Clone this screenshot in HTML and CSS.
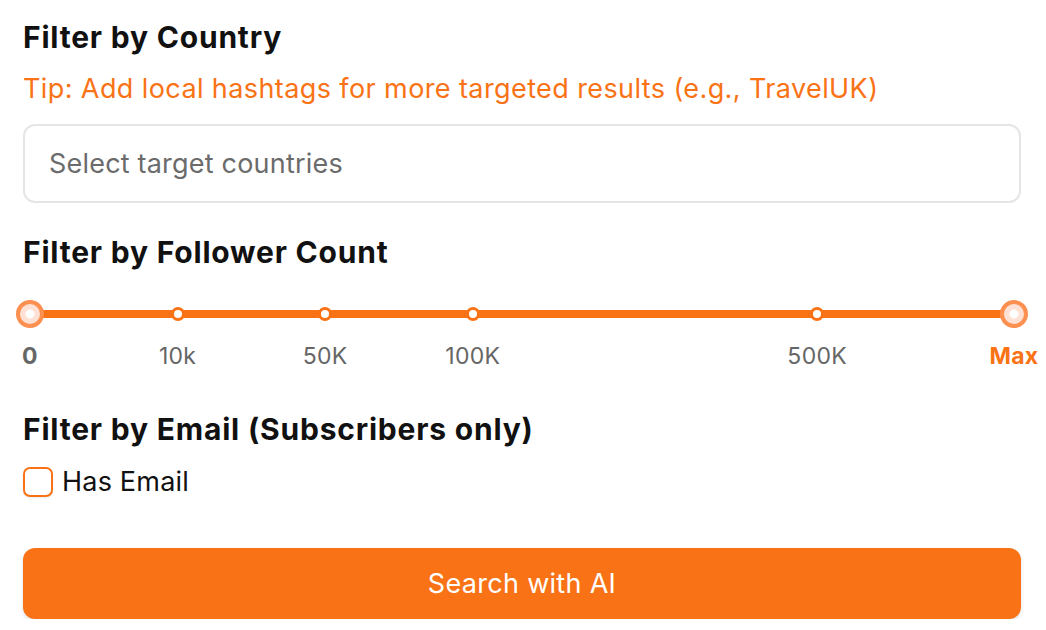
FILE: index.html
```html
<!DOCTYPE html>
<html>
<head>
<meta charset="utf-8">
<link rel="stylesheet" href="styles.css">
</head>
<body>
<div class="panel">
  <section class="group">
    <h2 class="title">Filter by Country</h2>
    <p class="tip">Tip: Add local hashtags for more targeted results (e.g., TravelUK)</p>
    <div class="select">Select target countries</div>
  </section>

  <section class="group">
    <h2 class="title">Filter by Follower Count</h2>
    <div class="slider">
      <div class="track">
        <span class="handle" style="left:0%"></span>
        <span class="tick" style="left:15%"></span>
        <span class="tick" style="left:30%"></span>
        <span class="tick" style="left:45%"></span>
        <span class="tick" style="left:80%"></span>
        <span class="handle" style="left:100%"></span>
      </div>
      <div class="labels">
        <span class="label strong" style="left:0%">0</span>
        <span class="label" style="left:15%">10k</span>
        <span class="label" style="left:30%">50K</span>
        <span class="label" style="left:45%">100K</span>
        <span class="label" style="left:80%">500K</span>
        <span class="label max" style="left:100%">Max</span>
      </div>
    </div>
  </section>

  <section class="group">
    <h2 class="title">Filter by Email (Subscribers only)</h2>
    <label class="check">
      <span class="box"></span>
      <span>Has Email</span>
    </label>
  </section>

  <button class="search">Search with AI</button>
</div>
</body>
</html>
```

FILE: styles.css
```css
* { box-sizing: border-box; }
html, body { margin: 0; padding: 0; background: #fff; }
body {
  font-family: Inter, "Noto Sans", "Liberation Sans", sans-serif;
  color: #111;
}
.panel {
  width: 998px;
  margin-left: 23px;
  padding-top: 18px;
  display: flex;
  flex-direction: column;
}
.title {
  margin: 0;
  font-size: 30px;
  line-height: 38px;
  font-weight: 700;
  color: #111;
  letter-spacing: 0.8px;
}
.tip {
  margin: 18px 0 0;
  font-size: 27px;
  line-height: 30px;
  color: #f97316;
  letter-spacing: 0.4px;
}
.select {
  margin-top: 20px;
  height: 79px;
  border: 2px solid #e5e5e5;
  border-radius: 12px;
  padding: 0 24px;
  display: flex;
  align-items: center;
  font-size: 27px;
  letter-spacing: 0.2px;
  color: #6b6b6b;
}
.group:nth-child(2) { margin-top: 30px; }
.slider {
  position: relative;
  margin-top: 39px;
  padding: 0 7px;
}
.track {
  position: relative;
  height: 8px;
  background: #f97316;
  border-radius: 4px;
}
.tick, .handle {
  position: absolute;
  top: 50%;
  transform: translate(-50%, -50%);
  border-radius: 50%;
  background: #fff;
}
.tick {
  width: 14px;
  height: 14px;
  border: 3px solid #f97316;
}
.handle {
  width: 28px;
  height: 28px;
  border: 4px solid #fd8f50;
  background: radial-gradient(circle, #fff 0 4px, #fde1d4 5px);
}
.labels {
  position: relative;
  height: 30px;
  margin-top: 23px;
}
.label {
  position: absolute;
  top: 0;
  transform: translateX(-50%);
  font-size: 23px;
  letter-spacing: 0.3px;
  line-height: 30px;
  color: #666;
  white-space: nowrap;
}
.label.strong { font-weight: 700; color: #666; }
.label.max { font-weight: 700; color: #f97316; }
.group:nth-child(3) { margin-top: 39px; }
.check {
  margin-top: 17px;
  display: flex;
  align-items: center;
  gap: 9px;
  font-size: 27px;
  letter-spacing: 0.2px;
  color: #111;
}
.box {
  width: 30px;
  height: 30px;
  border: 2px solid #f97316;
  border-radius: 7px;
  background: #fff;
  box-shadow: 0 1px 2px rgba(0,0,0,0.08);
}
.search {
  margin-top: 50px;
  height: 71px;
  width: 100%;
  border: none;
  border-radius: 12px;
  background: #f97316;
  color: #fff;
  font-family: Inter, "Noto Sans", sans-serif;
  font-size: 27px;
  letter-spacing: 0.3px;
  box-shadow: 0 2px 4px rgba(0,0,0,0.12);
}
```
